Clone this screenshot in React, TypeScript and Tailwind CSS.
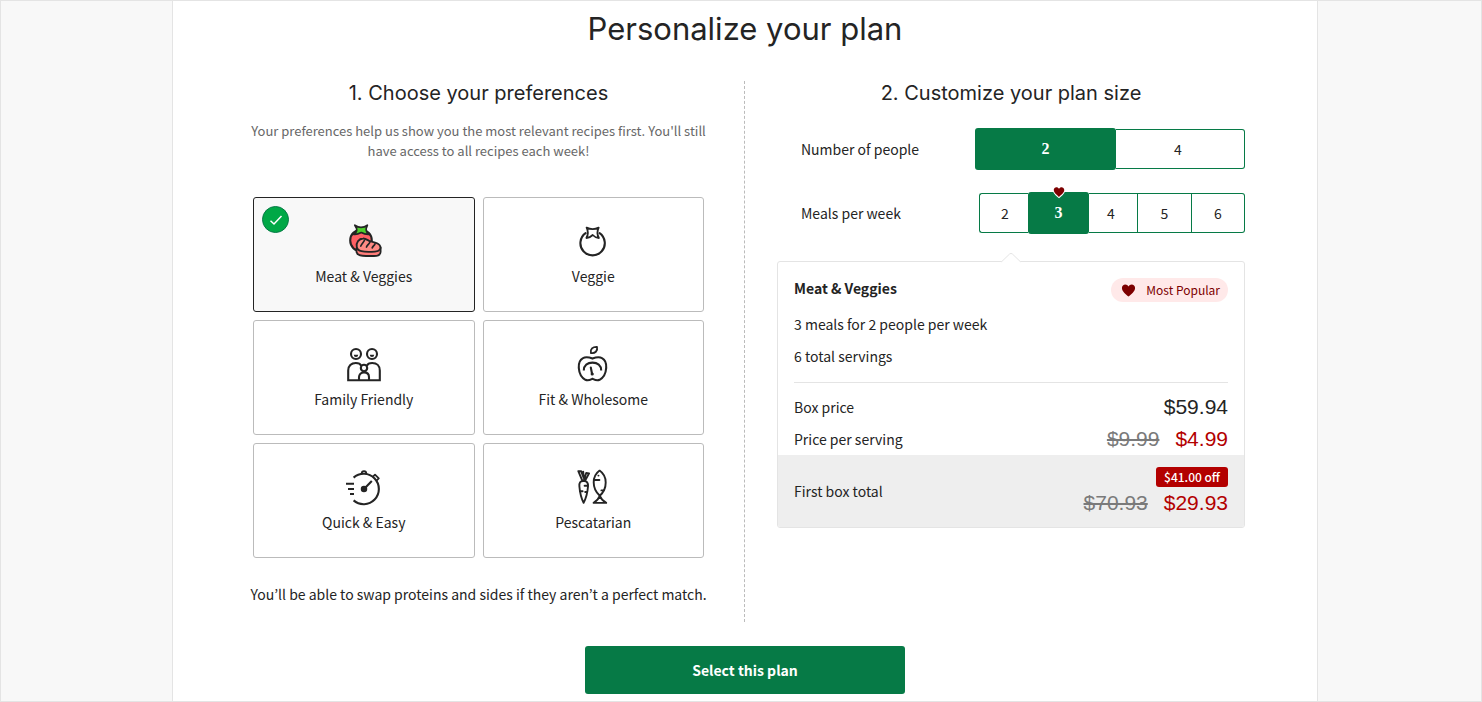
import { useState, type ReactNode } from "react";

const ink = "#242424";

function IconFrame({ children }: { children: ReactNode }) {
  return (
    <svg
      viewBox="0 0 40 40"
      className="size-10"
      fill="none"
      stroke={ink}
      strokeWidth="2.1"
      strokeLinecap="round"
      strokeLinejoin="round"
      aria-hidden="true"
    >
      {children}
    </svg>
  );
}

function MeatIcon() {
  return (
    <IconFrame>
      <circle cx="17" cy="19.5" r="10.8" fill="#ff5f64" />
      <path
        d="M10.8 4.2 C13.5 6 15 6.4 17 6.4 C19 6.4 21 6 23.4 4.2 C22 6.8 21.8 8.6 22.6 10.5 C23.2 11.7 24 12.6 25 13.4 C22 13.6 19.5 12.8 17.3 11.6 C15 12.8 12.4 13.8 9.8 13.4 C11.2 12.4 12 11.5 12.5 10.3 C13.2 8.4 12.6 6.6 10.8 4.2Z"
        fill="#4fd02c"
        strokeWidth="1.7"
      />
      <path
        d="M12.5 27.5 V31 C13 33.8 17 35 22 35 H30 C34.5 35 36.6 33.5 36.6 31 V26.5 Z"
        fill="#ff7d7a"
        strokeWidth="1.8"
      />
      <path
        d="M12.8 26 C11.8 21.5 15 17.7 19 17.5 C21.5 17.3 23.4 19 26 20.2 C29.5 21.2 33.5 21.5 35.5 24 C38 27.4 35.5 30.4 31 30.6 C25.5 31 20.5 31 17.5 30.2 C14.6 29.6 13.2 28.2 12.8 26Z"
        fill="#ff8b84"
        strokeWidth="1.8"
      />
      <path
        d="M16.8 25 C18 22.5 18.8 22.3 20.3 19.6 M22.5 26 C23.4 23.8 24.8 23.6 26 21 M28.2 26.8 C29 25 30.2 24.7 31 22.8"
        strokeWidth="1.7"
      />
    </IconFrame>
  );
}

function VeggieIcon() {
  return (
    <IconFrame>
      <path d="M12.6 12.2 A12.2 12.2 0 1 0 26.6 12.2" />
      <path
        d="M13.6 6.6 C17.5 8.6 21.8 8.6 25.7 6.6 C23.9 10.2 23.9 13.4 25.9 17 C23.4 16.8 21.4 15.8 19.7 14 C17.9 15.8 15.9 16.8 13.4 17 C15.4 13.4 15.4 10.2 13.6 6.6Z"
        strokeWidth="1.8"
      />
    </IconFrame>
  );
}

function FamilyIcon() {
  return (
    <IconFrame>
      <circle cx="12" cy="10" r="5" />
      <circle cx="28" cy="10" r="5" />
      <path
        d="M9.8 10.8 H14.2 A2.2 2.2 0 0 1 9.8 10.8Z M25.8 10.8 H30.2 A2.2 2.2 0 0 1 25.8 10.8Z"
        fill={ink}
        stroke="none"
      />
      <g strokeLinecap="butt" strokeLinejoin="miter">
        <path d="M17.3 21.8 C16.3 19.6 14 19 11.8 19 C7.2 19 4.2 22 4.2 26.5 V36.2 H35.8 V26.5 C35.8 22 32.8 19 28.2 19 C26 19 23.7 19.6 22.7 21.8" />
        <circle cx="20" cy="24" r="3.2" />
        <path d="M15 36.2 V33.2 C15 30.2 17 28.4 20 28.4 S25 30.2 25 33.2 V36.2" />
      </g>
    </IconFrame>
  );
}

function FitIcon() {
  return (
    <IconFrame>
      <path d="M19.5 14.6 C16.4 13.4 13 12.4 10 14.2 C6.6 16.1 5.5 20 5.8 24 C6.2 29.3 8.7 33.8 12.4 35.8 C15.2 37.2 17 36 19.5 34.8 C22 36 23.8 37.2 26.6 35.8 C30.3 33.8 32.8 29.3 33.2 24 C33.5 20 32.4 16.1 29 14.2 C26 12.4 22.6 13.4 19.5 14.6Z" />
      <path d="M17.9 9 C17.1 5.2 19.6 2.7 24 2.9 C25 6.9 22 9.8 17.9 9Z" strokeWidth="1.8" />
      <path d="M10.8 26.4 C10.9 21.5 14.5 18.6 19.5 18.6 S28.1 21.5 28.2 26.4" strokeLinecap="butt" />
      <path d="M17.8 23.5 L19 29.5" />
      <circle cx="19.2" cy="30" r="1" fill={ink} strokeWidth="1.2" />
    </IconFrame>
  );
}

function QuickIcon() {
  return (
    <IconFrame>
      <path d="M9.6 10.6 A15.2 15.2 0 1 1 9.6 33.4" strokeLinecap="butt" />
      <path d="M17.7 6.6 C17.7 3.2 22.3 3.2 22.3 6.6 M29.2 9.3 L31 7.6 L34.8 11.3 L33 13.1" strokeWidth="1.8" />
      <circle cx="20" cy="22" r="2.2" fill={ink} />
      <path d="M20 22 L27.8 14" strokeLinecap="butt" />
      <path d="M2 16.8 H10 M4 22 H10 M6 27 H10" strokeLinecap="butt" />
    </IconFrame>
  );
}

function PescatarianIcon() {
  return (
    <IconFrame>
      <g strokeWidth="1.9">
        <path d="M10.6 14 C7.2 13.7 6 16 6.4 19.5 C6.9 25.5 8.4 31.5 10.6 35.8 C12.9 31.5 14.5 25.5 15 19.5 C15.3 16 14 13.7 10.6 14Z" />
        <path d="M9.4 13.8 L5.3 4.1 L8.2 4.3 L10.7 11 L10.2 4.6 M10.8 13.5 L13.2 6 L16.1 6.4 L12 13.8" />
        <path d="M14.6 18.7 H11.6 M7 24.3 H9.6 M13.9 25 H12.2" />
        <path d="M26.8 28.8 C22.8 25.2 20.7 21 20.7 15.5 C20.7 10.5 22.8 6.3 26.6 3.6 C30.4 6.3 32.7 10.5 32.7 15.5 C32.7 21 30.8 25.2 26.8 28.8Z" />
        <path d="M26.8 28.8 C25.6 32 23.2 34.2 20.6 35.9 H33.2 C30.6 34.2 28 32 26.8 28.8Z" />
        <path d="M21.4 13 H26.4 M25.4 8.6 h.1 M30.8 23.4 L28.4 23.4" />
      </g>
    </IconFrame>
  );
}

function Heart({ className, outlined = false }: { className: string; outlined?: boolean }) {
  return (
    <svg viewBox="0 0 16 16" className={className} aria-hidden="true">
      <path
        d="M8 14.5 C5 12 1 9 1 5.4 C1 3 2.7 1.6 4.6 1.6 C6 1.6 7.3 2.4 8 3.7 C8.7 2.4 10 1.6 11.4 1.6 C13.3 1.6 15 3 15 5.4 C15 9 11 12 8 14.5Z"
        fill="#7d0000"
        stroke={outlined ? "#fff" : "none"}
        strokeWidth="3"
        paintOrder="stroke"
      />
    </svg>
  );
}

const preferences = [
  { name: "Meat & Veggies", Icon: MeatIcon },
  { name: "Veggie", Icon: VeggieIcon },
  { name: "Family Friendly", Icon: FamilyIcon },
  { name: "Fit & Wholesome", Icon: FitIcon },
  { name: "Quick & Easy", Icon: QuickIcon },
  { name: "Pescatarian", Icon: PescatarianIcon },
];

function PreferenceCard({
  name,
  selected,
  onSelect,
  children,
}: {
  name: string;
  selected: boolean;
  onSelect: () => void;
  children: ReactNode;
}) {
  return (
    <button
      type="button"
      aria-pressed={selected}
      onClick={onSelect}
      className={`relative flex h-[115px] flex-col items-center justify-center gap-1 rounded-[3px] border pb-0.5 ${
        selected ? "border-[#242424] bg-[#f8f8f8]" : "border-[#bbbbbb] bg-white"
      }`}
    >
      {selected && (
        <span className="absolute top-2 left-2 flex size-[27px] items-center justify-center rounded-full border border-[#067a46] bg-[#00a846]">
          <svg viewBox="0 0 16 16" className="size-4" fill="none" stroke="#fff" strokeWidth="1.5" aria-hidden="true">
            <path d="M2.5 8.8 L6 12 L13.5 4" />
          </svg>
        </span>
      )}
      {children}
      <span className="leading-[22px]">{name}</span>
    </button>
  );
}

function Segments({
  label,
  options,
  widths,
  value,
  onChange,
  popular,
}: {
  label: string;
  options: number[];
  widths: string[];
  value: number;
  onChange: (n: number) => void;
  popular?: number;
}) {
  return (
    <div className="flex items-center justify-between pl-6">
      <span className="leading-6">{label}</span>
      <div role="group" aria-label={label} className="flex h-[42px] items-center">
        {options.map((n, i) => {
          const active = n === value;
          return (
            <button
              key={n}
              type="button"
              aria-pressed={active}
              onClick={() => onChange(n)}
              className={`relative ${widths[i]} ${
                active
                  ? "h-[42px] rounded-[3px] bg-[#067a46] font-['Liberation_Serif',serif] text-base font-bold text-white"
                  : `h-10 border-y border-r border-[#067a46] ${i === 0 ? "rounded-l-[3px] border-l" : ""} ${
                      i === options.length - 1 ? "rounded-r-[3px]" : ""
                    } ${options[i + 1] === value ? "border-r-0 pl-0.5" : ""} ${options[i - 1] === value ? "pr-1" : ""}`
              }`}
            >
              {n}
              {popular === n && (
                <span className="absolute inset-x-0 -top-1.5 flex justify-center">
                  <Heart className="size-3 overflow-visible" outlined />
                </span>
              )}
            </button>
          );
        })}
      </div>
    </div>
  );
}

export default function App() {
  const [preference, setPreference] = useState("Meat & Veggies");
  const [people, setPeople] = useState(2);
  const [meals, setMeals] = useState(3);

  return (
    <div className="flex min-h-screen justify-center border border-[#e4e4e4] bg-[#f8f8f8] pl-2 font-['Noto_Sans_CJK_JP',sans-serif] text-[14px] text-[#242424]">
      <main className="w-full max-w-[1146px] border-x border-[#e4e4e4] bg-white px-10 pt-2 pb-[7px]">
        <h1 className="text-center font-['Inter',sans-serif] text-[31px] leading-10">Personalize your plan</h1>

        <div className="mt-8 grid grid-cols-2">
          <section className="border-r border-dashed border-[#bbbbbb] px-10 pb-4">
            <h2 className="text-center font-['Inter',sans-serif] text-[20px] leading-6">
              1. Choose your preferences
            </h2>
            <p className="-mx-4 mt-4 text-center text-[13px] leading-5 text-[#676767]">
              Your preferences help us show you the most relevant recipes first. You'll still
              <br />
              have access to all recipes each week!
            </p>
            <div className="mt-9 grid grid-cols-2 gap-2">
              {preferences.map(({ name, Icon }) => (
                <PreferenceCard
                  key={name}
                  name={name}
                  selected={name === preference}
                  onSelect={() => setPreference(name)}
                >
                  <Icon />
                </PreferenceCard>
              ))}
            </div>
            <p className="-mx-8 mt-6 text-center leading-6">
              You’ll be able to swap proteins and sides if they aren’t a perfect match.
            </p>
          </section>

          <section className="px-8">
            <h2 className="text-center font-['Inter',sans-serif] text-[20px] leading-6">
              2. Customize your plan size
            </h2>
            <div className="mt-[23px] flex flex-col gap-[22px]">
              <Segments
                label="Number of people"
                options={[2, 4]}
                widths={["w-[141px]", "w-[129px]"]}
                value={people}
                onChange={setPeople}
              />
              <Segments
                label="Meals per week"
                options={[2, 3, 4, 5, 6]}
                widths={["w-[49px]", "w-[61px]", "w-[49px]", "w-[54px]", "w-[53px]"]}
                value={meals}
                onChange={setMeals}
                popular={3}
              />
            </div>

            <div className="relative mt-[27px] rounded-[3px] border border-[#e4e4e4]">
              <svg
                viewBox="0 0 20 11"
                className="absolute -top-[10px] left-1/2 h-[11px] w-5 -translate-x-1/2"
                fill="#fff"
                stroke="#e4e4e4"
                aria-hidden="true"
              >
                <path d="M0 11 L1 9.5 L8.6 2 Q10 .8 11.4 2 L19 9.5 L20 11" stroke="none" />
                <path d="M.5 9.8 L8.6 2 Q10 .8 11.4 2 L19.5 9.8" />
              </svg>
              <div className="px-4 pt-4 pb-1">
                <div className="flex items-start justify-between">
                  <h3 className="leading-5 font-bold">{preference}</h3>
                  <span className="flex h-6 items-center gap-2.5 rounded-full bg-[#ffe9e9] px-2 text-[12px] text-[#7d0000]">
                    <Heart className="ml-0.5 size-[15px]" />
                    Most Popular
                  </span>
                </div>
                <p className="mt-2.5 leading-6">
                  {meals} meals for {people} people per week
                </p>
                <p className="mt-2 leading-6">{meals * people} total servings</p>
                <hr className="mt-3.5 border-[#e4e4e4]" />
                <div className="mt-3 flex h-6 items-center justify-between">
                  <span>Box price</span>
                  <span className="font-['Liberation_Sans',sans-serif] text-[21px]">$59.94</span>
                </div>
                <div className="mt-2 flex h-6 items-center justify-between">
                  <span>Price per serving</span>
                  <span className="flex gap-4 font-['Liberation_Sans',sans-serif] text-[21px] leading-6">
                    <s className="text-[#7a7a7a]">$9.99</s>
                    <span className="text-[#b30000]">$4.99</span>
                  </span>
                </div>
              </div>
              <div className="flex h-[72px] items-center justify-between rounded-b-[2px] bg-[#eeeeee] px-4">
                <span>First box total</span>
                <div className="flex flex-col items-end gap-1">
                  <span className="rounded-[3px] bg-[#b30000] px-2 text-[12px] leading-5 font-medium text-white">
                    $41.00 off
                  </span>
                  <span className="flex gap-4 font-['Liberation_Sans',sans-serif] text-[21px] leading-6">
                    <s className="text-[#7a7a7a]">$70.93</s>
                    <span className="text-[#b30000]">$29.93</span>
                  </span>
                </div>
              </div>
            </div>
          </section>
        </div>

        <button
          type="button"
          className="mx-auto mt-6 block h-12 w-80 rounded-[3px] bg-[#067a46] font-bold text-white"
        >
          Select this plan
        </button>
      </main>
    </div>
  );
}
